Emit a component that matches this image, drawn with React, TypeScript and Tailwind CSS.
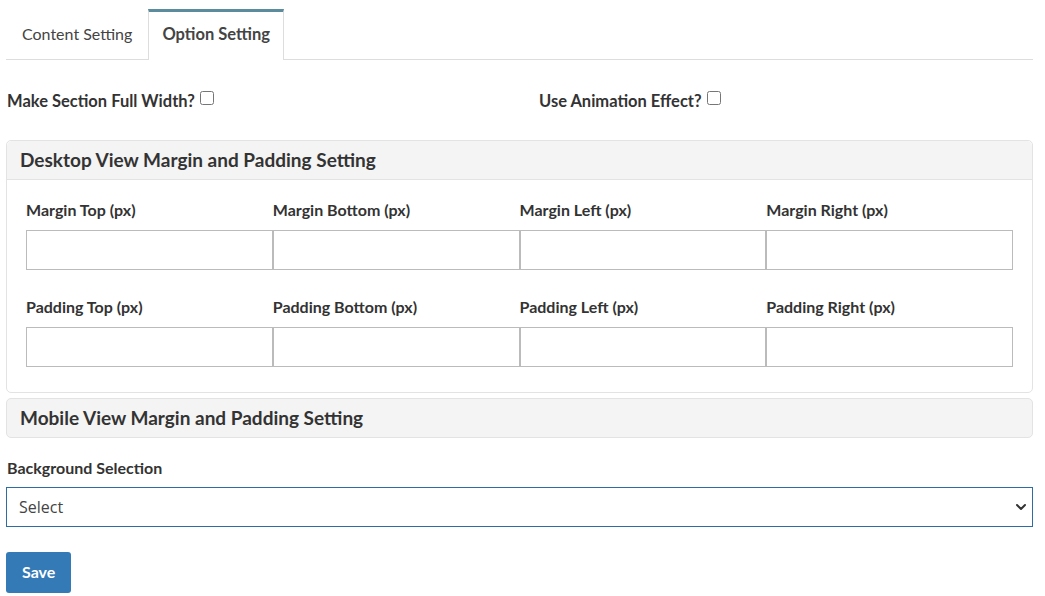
import { ChevronDown } from "lucide-react";

const desktopFields = [
  ["Margin Top (px)", "Margin Bottom (px)", "Margin Left (px)", "Margin Right (px)"],
  ["Padding Top (px)", "Padding Bottom (px)", "Padding Left (px)", "Padding Right (px)"],
];

function FieldRow({ labels }: { labels: string[] }) {
  return (
    <div className="grid grid-cols-4">
      {labels.map((label) => (
        <div key={label}>
          <label className="block h-[21px] text-[16px] font-bold leading-[21px] text-[#333]">{label}</label>
          <input
            type="text"
            className="mt-[10px] block h-[40px] w-full border border-[#bbb] bg-white px-3 outline-none"
          />
        </div>
      ))}
    </div>
  );
}

export default function App() {
  return (
    <div className="min-h-[596px] bg-white font-['Lato',sans-serif] text-[#333]">
      <div className="pl-[6px] pr-[12px] pt-[9px]">
        {/* tabs */}
        <div className="flex border-b border-[#ddd]">
          <button className="h-[50px] px-[16px] text-[16px] text-[#444]">Content Setting</button>
          <button className="-mb-px h-[51px] border-x border-t-[3px] border-x-[#ddd] border-t-[#5b8c9e] bg-white px-[13px] pb-[4px] text-[16.5px] font-bold text-[#444]">
            Option Setting
          </button>
        </div>

        {/* toggles */}
        <div className="mt-[29px] grid grid-cols-[532px_1fr] pl-px">
          <label className="flex items-center gap-[5px] text-[16.5px] font-bold">
            Make Section Full Width?
            <input type="checkbox" className="-mt-[6px] h-[14px] w-[14px]" />
          </label>
          <label className="flex items-center gap-[5px] text-[16.5px] font-bold">
            Use Animation Effect?
            <input type="checkbox" className="-mt-[6px] h-[14px] w-[14px]" />
          </label>
        </div>

        {/* desktop panel */}
        <div className="mt-[26px] rounded-[5px] border border-[#e3e3e3]">
          <div className="flex h-[39px] items-center rounded-t-[5px] border-b border-[#e3e3e3] bg-[#f4f4f4] px-[13px] text-[19px] font-bold">
            Desktop View Margin and Padding Setting
          </div>
          <div className="flex flex-col gap-[26px] px-[19px] pb-[25px] pt-[19px]">
            {desktopFields.map((row, i) => (
              <FieldRow key={i} labels={row} />
            ))}
          </div>
        </div>

        {/* mobile panel */}
        <div className="mt-[5px] flex h-[40px] items-center rounded-[5px] border border-[#e3e3e3] bg-[#f4f4f4] px-[13px] text-[19px] font-bold">
          Mobile View Margin and Padding Setting
        </div>

        {/* background */}
        <label className="mt-[19px] block pl-px text-[16px] font-bold leading-[21px]">Background Selection</label>
        <div className="relative mt-[9px]">
          <select className="block h-[40px] w-full appearance-none border border-[#2e6da4] bg-white px-[12px] font-['Open_Sans',sans-serif] text-[16px] text-[#444] outline-none">
            <option>Select</option>
          </select>
          <ChevronDown className="pointer-events-none absolute right-[4px] top-[12px] h-[16px] w-[16px] text-[#333]" strokeWidth={3} />
        </div>

        <button className="mt-[25px] h-[41px] rounded-[3px] bg-[#337ab7] px-[16px] text-[16px] font-bold text-white">
          Save
        </button>
      </div>
    </div>
  );
}
